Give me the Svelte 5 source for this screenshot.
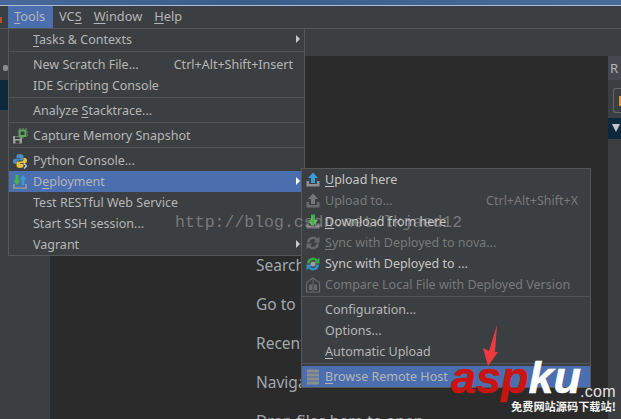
<script>
  const toolsMenu = [
    { pre: '', key: 'T', post: 'asks & Contexts', arrow: true },
    { sep: true },
    { pre: 'New Scratch File...', key: '', post: '', shortcut: 'Ctrl+Alt+Shift+Insert' },
    { pre: 'IDE Scripting Console', key: '', post: '' },
    { sep: true },
    { pre: 'Analyze ', key: 'S', post: 'tacktrace...' },
    { sep: true },
    { pre: 'Capture Memory Snapshot', key: '', post: '', icon: 'memory' },
    { sep: true },
    { pre: 'Python Console...', key: '', post: '', icon: 'python' },
    { pre: 'D', key: 'e', post: 'ployment', icon: 'deploy', arrow: true, active: true },
    { pre: 'Test RESTful Web Service', key: '', post: '' },
    { pre: 'Start SSH session...', key: '', post: '' },
    { pre: 'Vagrant', key: '', post: '', arrow: true }
  ];
  const deployMenu = [
    { pre: '', key: 'U', post: 'pload here', icon: 'upload', bright: true },
    { pre: 'Upload to...', key: '', post: '', icon: 'uploadOff', off: true, shortcut: 'Ctrl+Alt+Shift+X' },
    { pre: '', key: 'D', post: 'ownload from here', icon: 'download', bright: true },
    { pre: '', key: 'S', post: 'ync with Deployed to nova...', icon: 'syncOff', off: true },
    { pre: 'Sync with Deployed to ...', key: '', post: '', icon: 'sync', bright: true },
    { pre: 'Compare Local File with Deployed Version', key: '', post: '', icon: 'compare', off: true },
    { sep: true },
    { pre: 'Configuration...', key: '', post: '' },
    { pre: 'Options...', key: '', post: '' },
    { pre: '', key: 'A', post: 'utomatic Upload' },
    { sep: true },
    { pre: '', key: 'B', post: 'rowse Remote Host', icon: 'server', active: true }
  ];
  const bar = [
    { key: 'T', post: 'ools', open: true },
    { pre: 'VC', key: 'S', post: '' },
    { key: 'W', post: 'indow' },
    { key: 'H', post: 'elp' }
  ];
  const welcome = ['Search Everywhere Double Shift', 'Go to File Ctrl+Shift+N', 'Recent Files Ctrl+E', 'Navigation Bar Alt+Home', 'Drop files here to open'];
</script>

{#snippet icon(name)}
  <svg class="ico" viewBox="0 0 16 16" aria-hidden="true">
    {#if name === 'upload' || name === 'uploadOff'}
      <path d="M1.5 9v5.5h13V9h-2.6v3H4.100V9z" fill={name === 'upload' ? '#8c9094' : '#6a6d70'} />
      <path d="M8 0.500 13 6H10V11H6V6H3z" fill={name === 'upload' ? '#3d9bd8' : '#74777a'} />
    {:else if name === 'download'}
      <path d="M1.500 9.500v5h13v-5h-2.600v2.500H4.100V9.500z" fill="#75787b" />
      <path d="M6 0.500h4V6h3l-5 6.500L3 6h3z" fill="#47b04b" />
    {:else if name === 'sync' || name === 'syncOff'}
      <path d="M2 7.500A6 6 0 0 1 12.400 3.500L14.500 1.500V7.500H8.500L10.700 5.300A3.500 3.500 0 0 0 4.600 7.500z" fill={name === 'sync' ? '#37a84a' : '#66696c'} />
      <path d="M14 8.500A6 6 0 0 1 3.600 12.500L1.500 14.500V8.500H7.500L5.300 10.700A3.500 3.500 0 0 0 11.400 8.500z" fill={name === 'sync' ? '#2f8fc8' : '#66696c'} />
      {#if name === 'sync'}<circle cx="8" cy="8" r="2.600" fill="#9a9da0" />{/if}
    {:else if name === 'compare'}
      <path d="M1.500 15V5.500L8 1l6.500 4.500V15z" fill="none" stroke="#66696c" stroke-width="1.200" />
      <path d="M4 7.500h3V13H4zM9 7.500h3V13H9z" fill="#66696c" />
      <path d="M8 1.500v13" stroke="#66696c" />
    {:else if name === 'memory'}
      <rect x="1" y="8" width="9" height="7.500" fill="#9a9da0" />
      <rect x="3" y="8.500" width="5" height="2.500" fill="#3c3f41" />
      <rect x="3.500" y="12.500" width="4" height="3" fill="#3c3f41" />
      <rect x="6.500" y="1.500" width="8" height="7.500" fill="#5fa55f" />
      <rect x="8.500" y="3.500" width="4" height="3.500" fill="#3c3f41" />
      <path d="M8 0v1.500M11 0v1.500M14 0v1.500M15 4h1M15 7h1M8 9v1.500M11 9v1.500" stroke="#5fa55f" />
    {:else if name === 'python'}
      <path d="M8 1C5 1 4.500 2 4.500 3.500V5H8v.7H3C1.500 5.700 1 7 1 8.500S1.700 11 3 11h1.500V9.500C4.500 8.300 5.500 7.500 6.500 7.500H10c1 0 1.500-.7 1.500-1.500V3.500C11.500 2 10.500 1 8 1z" fill="#4c8cc4" />
      <path d="M8 15c3 0 3.500-1 3.500-2.500V11H8v-.7h5c1.500 0 2-1.300 2-2.800S14.300 5 13 5h-1.500v1.500c0 1.200-1 2-2 2H6c-1 0-1.500.7-1.500 1.500v2.500C4.500 14 5.500 15 8 15z" fill="#e6c13e" />
      <path d="M12 10.500l2.500 2.500-2.500 2.500" fill="none" stroke="#cfd2d4" stroke-width="1.300" />
    {:else if name === 'deploy'}
      <path d="M1 10v5h14v-5h-1.800v3.200H2.800V10z" fill="#8f9498" />
      <path d="M3.500 1h3v5.500H8.500L5 11.500 1.500 6.500h2z" fill="#49b14c" />
      <path d="M11 1l3.500 4.500h-2V11h-3V5.500h-2z" fill="#3e9ad6" />
    {:else if name === 'server'}
      <path d="M2 0.500h12v3H2zM2 4.500h12v3H2zM2 8.500h12v3H2zM2 12.500h12v3H2z" fill="#8b8d8f" />
      <rect x="11" y="13.500" width="2" height="1.500" fill="#55b257" />
    {/if}
  </svg>
{/snippet}

{#snippet menuRows(rows)}
  {#each rows as r}
    {#if r.sep}
      <div class="sep"></div>
    {:else}
      <div class="row" class:active={r.active} class:off={r.off} class:bright={r.bright}>
        <span class="slot">{#if r.icon}{@render icon(r.icon)}{/if}</span>
        <span class="label">{r.pre}<u>{r.key}</u>{r.post}</span>
        {#if r.shortcut}<span class="shortcut">{r.shortcut}</span>{/if}
        {#if r.arrow}<span class="arrow"></span>{/if}
      </div>
    {/if}
  {/each}
{/snippet}

<div class="frame">
  <div class="titlebar"></div>
  <nav class="menubar">
    <span class="mark"></span>
    {#each bar as b}
      <span class="top" class:open={b.open}>{b.pre ?? ''}<u>{b.key}</u>{b.post}</span>
    {/each}
  </nav>
  <div class="toolbar"></div>
  <div class="main">
    <aside class="left">
      <div class="gear"></div>
      <div class="selected"></div>
    </aside>
    <section class="editor">
      {#each welcome as w}<p>{w}</p>{/each}
    </section>
    <aside class="right">
      <div class="rhead">R</div>
      <div class="rtool"><span class="rbox"></span></div>
      <div class="rsel"><span class="tri"></span></div>
    </aside>
  </div>

  <div class="menu tools">{@render menuRows(toolsMenu)}</div>
  <div class="menu deploy">{@render menuRows(deployMenu)}</div>

  <div class="watermark">http://blog.csdn.net/lkjaed12</div>

  <svg class="pointer" viewBox="0 0 20 45" aria-hidden="true">
    <path d="M15 0 L13 27 L16 27 L6 41 L1 23 L7 26 Z" fill="#f0393f" />
  </svg>

  <div class="logo">
    <span class="red">asp</span><span class="white">ku</span><span class="com">.com</span>
    <span class="tag">免费网站源码下载站!</span>
  </div>
</div>

<style>
  :global(body) { margin: 0; background: #2b2b2b; }
  .frame {
    position: relative;
    width: 621px;
    height: 419px;
    overflow: hidden;
    display: flex;
    flex-direction: column;
    font-family: "Noto Sans", "Open Sans", sans-serif;
    font-size: 12.500px;
    color: #b4b6b8;
    background: #3c3f41;
  }
  u { text-underline-offset: 2px; text-decoration-thickness: 1px; }
  .titlebar {
    height: 6px;
    flex: none;
    background: linear-gradient(90deg, #46689a, #3a5d8c 40%, #4a6c9c);
    border-bottom: 1px solid #a9bad2;
    box-sizing: border-box;
  }
  .menubar {
    height: 22px;
    flex: none;
    display: flex;
    align-items: stretch;
    background: #3c3f41;
    border-bottom: 1px solid #555555;
    padding-left: 8px;
    font-size: 12.800px;
  }
  .mark { position: absolute; left: 0; top: 17px; width: 2px; height: 6px; background: #a8562a; }
  .top { padding: 0 6px; line-height: 21px; }
  .top.open { background: #4b6eaf; width: 33px; }
  .toolbar { height: 27px; flex: none; background: #3c3f41; }
  .main { flex: 1; min-height: 0; display: flex; }
  .left { width: 50px; flex: none; background: #3c3f41; }
  .gear { width: 5px; height: 6px; margin: 9px 0 0 3px; background: #8a8c8e; border-radius: 2px; }
  .selected { margin-top: 9px; height: 30px; background: #0d293e; width: 8px; }
  .editor {
    flex: 1;
    min-width: 0;
    background: #2b2b2b;
    padding: 190px 0 0 206px;
    font-size: 15.500px;
    color: #a3a7ab;
    overflow: hidden;
  }
  .editor p { margin: 0; line-height: 39px; white-space: nowrap; }
  .right { width: 13px; flex: none; background: #3c3f41; }
  .rhead { height: 24px; background: #45494f; line-height: 24px; padding-left: 2px; font-size: 13px; color: #b5b8bc; }
  .rtool { height: 38px; padding: 8px 0 0 5px; box-sizing: border-box; }
  .rbox { display: block; height: 25px; border: 1px solid #64676a; border-right: 0; border-radius: 3px 0 0 3px; box-sizing: border-box; position: relative; }
  .rbox::after { content: ""; position: absolute; right: 0; top: 7px; width: 2px; height: 10px; background: #e0952c; }
  .rsel { height: 21px; background: #0d293e; padding: 6px 0 0 4px; box-sizing: border-box; }
  .tri { display: block; width: 0; height: 0; border-left: 4.500px solid transparent; border-right: 4.500px solid transparent; border-top: 8px solid #c4c6c8; }

  .menu {
    position: absolute;
    background: #3c3f41;
    border: 1px solid #555758;
    box-sizing: border-box;
    display: flex;
    flex-direction: column;
  }
  .tools { left: 8px; top: 28px; width: 297px; height: 228px; }
  .deploy { left: 301px; top: 168px; width: 290px; height: 220px; }
  .row {
    height: 21px;
    flex: none;
    display: flex;
    align-items: center;
    position: relative;
    white-space: nowrap;
  }
  .tools .row { padding: 0 11px 0 3px; }
  .deploy .row { padding: 0 12px 0 3px; }
  .slot { width: 21px; flex: none; height: 16px; display: flex; }
  .deploy .slot { width: 20px; }
  .ico { width: 16px; height: 16px; display: block; }
  .label { flex: 1; }
  .row.active { background: #4b6eaf; }
  .row.bright { color: #c6c6c6; }
  .row.off { color: #77797b; }
  .arrow {
    position: absolute;
    right: 4px;
    top: 6px;
    width: 0;
    height: 0;
    border-top: 4px solid transparent;
    border-bottom: 4px solid transparent;
    border-left: 4px solid #c8c8c8;
  }
  .row.active .arrow { border-left-color: #ffffff; }
  .sep { height: 4px; flex: none; box-sizing: border-box; border-top: 1px solid #515456; margin-top: 1px; margin-bottom: -1px; }

  .watermark {
    position: absolute;
    left: 175px;
    top: 213px;
    font-family: "Liberation Mono", monospace;
    font-size: 16.500px;
    line-height: 20px;
    color: rgba(205, 205, 205, 0.42);
    white-space: nowrap;
  }
  .pointer { position: absolute; left: 482px; top: 325px; width: 20px; height: 45px; }
  .logo {
    position: absolute;
    left: 451px;
    top: 352px;
    width: 170px;
    height: 67px;
    font-family: "Liberation Sans", sans-serif;
    font-style: italic;
    font-weight: 700;
    font-size: 45px;
    line-height: 52px;
    white-space: nowrap;
    -webkit-text-stroke: 0.500px currentColor;
  }
  .red { color: #c9140f; }
  .white { color: #ffffff; }
  .com { position: absolute; left: 129px; top: 32px; font-size: 16px; line-height: 16px; font-weight: 400; font-style: normal; color: #e4e4e4; letter-spacing: 0.300px; -webkit-text-stroke: 0; }
  .tag {
    position: absolute;
    left: 60px;
    top: 46px;
    font-family: "Noto Sans CJK SC", sans-serif;
    font-style: normal;
    font-weight: 700;
    font-size: 11.200px;
    line-height: 16px;
    color: #f2f2f2;
    -webkit-text-stroke: 0;
  }
</style>
